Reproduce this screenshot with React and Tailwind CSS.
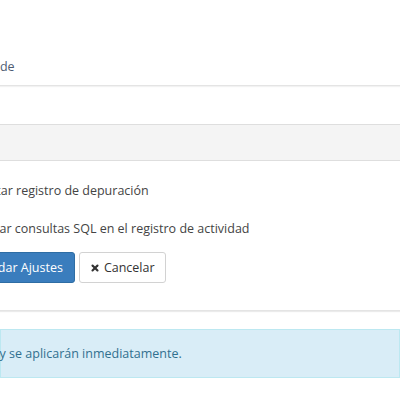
import { Save, X } from 'lucide-react'

const font = { fontFamily: '"Open Sans", "Liberation Sans", sans-serif' }

function CheckRow({ children }) {
  return (
    <label className="flex h-[18px] items-center gap-[5px] text-[#444]">
      <input type="checkbox" className="h-[13px] w-[13px]" />
      <span>{children}</span>
    </label>
  )
}

export default function App() {
  return (
    <div className="h-[400px] w-[400px] overflow-hidden bg-white text-[12.5px] leading-[18px] text-[#333]" style={font}>
      <div className="h-[86px] border-b border-[#e4e4e4] pt-[58px] shadow-[0_1px_1px_rgba(0,0,0,0.05)]">
        <p className="ml-[-51px] whitespace-nowrap text-[#4d5b72]">Registro de</p>
      </div>

      <div className="mt-[38px] shadow-[0_1px_1px_rgba(0,0,0,0.08)]">
        <div className="h-[37px] border-y border-[#dedede] bg-[#f4f4f4]" />
        <div className="border-b border-[#e4e4e4] pb-[27px] pt-[21px]">
          <div className="ml-[-55px] flex w-[460px] flex-col">
            <div className="flex flex-col gap-[20px]">
              <CheckRow>Habilitar registro de depuración</CheckRow>
              <CheckRow>Guardar consultas SQL en el registro de actividad</CheckRow>
            </div>
            <div className="ml-[-4px] mt-[14px] flex gap-[4px]">
              <button className="flex h-[31px] items-center gap-[4px] whitespace-nowrap rounded-[3px] border border-[#2e6da4] bg-[#3a7dbd] px-[11px] text-white">
                <Save size={12} strokeWidth={2.5} />
                Guardar Ajustes
              </button>
              <button className="flex h-[31px] items-center gap-[4px] whitespace-nowrap rounded-[3px] border border-[#d2d2d2] bg-white px-[10px] text-[#333]">
                <X size={10} strokeWidth={5} />
                Cancelar
              </button>
            </div>
          </div>
        </div>
      </div>

      <div className="mt-[18px] flex h-[49px] items-center border border-[#bce8f1] bg-[#d9edf7] text-[#31708f]">
        <p className="ml-[-157px] whitespace-nowrap">Los cambios se guardarán y se aplicarán inmediatamente.</p>
      </div>
    </div>
  )
}
